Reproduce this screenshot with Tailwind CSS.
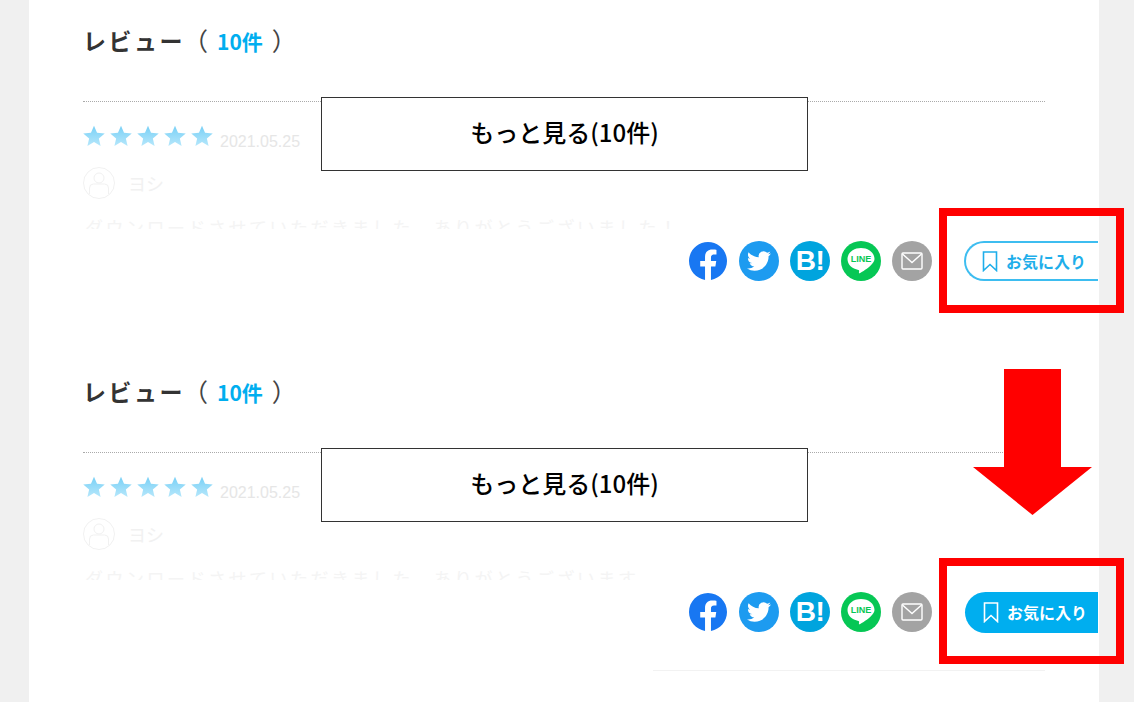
<!DOCTYPE html>
<html lang="ja">
<head>
<meta charset="utf-8">
<script src="https://cdn.jsdelivr.net/npm/@tailwindcss/browser@4"></script>
<title>レビュー</title>
</head>
<body class="m-0 bg-[#f0f0f0] overflow-hidden font-['Noto_Sans_CJK_JP','Noto_Sans',sans-serif]">
<svg width="0" height="0" class="absolute">
  <defs>
    <linearGradient id="st" x1="0" y1="0" x2="0" y2="1"><stop offset="0" stop-color="#78d0f6"/><stop offset="1" stop-color="#b6e7fb"/></linearGradient>
    <symbol id="star" viewBox="0 0 24 24"><path fill="url(#st)" d="M12 .8l3.3 7.7 8.4.7-6.4 5.500 1.900 8.200L12 18.600l-7.200 4.300 1.900-8.200L.3 9.200l8.400-.7z"/></symbol>
    <symbol id="fb" viewBox="0 0 24 24"><path fill="#1877f2" d="M24 12.073c0-6.627-5.373-12-12-12s-12 5.373-12 12c0 5.99 4.388 10.954 10.125 11.854v-8.385H7.078v-3.47h3.047V9.43c0-3.007 1.792-4.669 4.533-4.669 1.312 0 2.686.235 2.686.235v2.953H15.83c-1.491 0-1.956.925-1.956 1.874v2.25h3.328l-.532 3.47h-2.796v8.385C19.612 23.027 24 18.062 24 12.073z"/></symbol>
    <symbol id="tw" viewBox="0 0 40 40"><circle cx="20" cy="20" r="20" fill="#1d9bf0"/><g transform="translate(8 8) scale(1)"><path fill="#fff" d="M23.953 4.57a10 10 0 01-2.825.775 4.958 4.958 0 002.163-2.723c-.951.555-2.005.959-3.127 1.184a4.92 4.92 0 00-8.384 4.482C7.69 8.095 4.067 6.13 1.64 3.162a4.822 4.822 0 00-.666 2.475c0 1.71.87 3.213 2.188 4.096a4.904 4.904 0 01-2.228-.616v.06a4.923 4.923 0 003.946 4.827 4.996 4.996 0 01-2.212.085 4.936 4.936 0 004.604 3.417 9.867 9.867 0 01-6.102 2.105c-.39 0-.779-.023-1.17-.067a13.995 13.995 0 007.557 2.209c9.053 0 13.998-7.496 13.998-13.985 0-.21 0-.42-.015-.63A9.935 9.935 0 0024 4.59z"/></g></symbol>
    <symbol id="line" viewBox="0 0 40 40"><circle cx="20" cy="20" r="20" fill="#06c755"/><path fill="#fff" d="M20 7c-7.700 0-13.500 4.800-13.500 11.100 0 5.700 4.700 9.900 10.900 10.800.9.200.8 1 .6 2-.1.700-.4 1.900 1.200 1.100 1.600-.900 8.100-4.800 10.900-8 1.900-2.100 3.400-3.700 3.400-5.900C33.500 11.800 27.700 7 20 7z"/></symbol>
    <symbol id="mail" viewBox="0 0 40 40"><circle cx="20" cy="20" r="20" fill="#a3a3a3"/><g fill="none" stroke="#fff" stroke-width="1.400"><rect x="10" y="12" width="20" height="16" rx="1"/><path d="M10.500 13 20 21.500 29.500 13"/></g></symbol>
    <symbol id="bm" viewBox="0 0 16 21"><path fill="none" stroke="currentColor" stroke-width="1.600" d="M1.500 1h13v18.500L8 13.500l-6.500 6z"/></symbol>
    <symbol id="user" viewBox="0 0 32 32"><g fill="none" stroke="#f1f1f1" stroke-width="1"><circle cx="16" cy="16" r="15.500"/><circle cx="16" cy="11" r="5"/><path d="M6.500 27v-6q0-4 4-4h11q4 0 4 4v6"/></g></symbol>
  </defs>
</svg>

<main class="ml-[29px] w-[1070px] h-[702px] bg-white">

  <section class="relative h-[351px] pl-[54px] pr-[54px]">
    <h2 class="h-[84px] flex items-center pb-[4px] text-[23px] leading-none font-bold text-[#333] tracking-[2.5px]">
      <span>レビュー</span><span class="ml-[-2px] text-[25px] font-normal text-[#444] w-[34px] tracking-normal">（</span><span class="text-[#00aeef] text-[21px] tracking-normal font-bold mt-[3px]">10件</span><span class="text-[25px] font-normal text-[#444] ml-[9px] tracking-normal">）</span>
    </h2>
    <div class="h-[18px] border-b border-dotted border-[#aaa]"></div>
    <div class="h-[127px] overflow-hidden">
      <div class="flex items-center h-[24px] mt-[22px]">
        <div class="flex gap-[5px]">
          <svg class="w-[22px] h-[22px]"><use href="#star"/></svg><svg class="w-[22px] h-[22px]"><use href="#star"/></svg><svg class="w-[22px] h-[22px]"><use href="#star"/></svg><svg class="w-[22px] h-[22px]"><use href="#star"/></svg><svg class="w-[22px] h-[22px]"><use href="#star"/></svg>
        </div>
        <span class="ml-[7px] mt-[12px] text-[16px] leading-none text-[#e6e6e6] font-['Liberation_Sans',sans-serif]">2021.05.25</span>
      </div>
      <div class="flex items-center mt-[19px] h-[32px]">
        <svg class="w-[32px] h-[32px]"><use href="#user"/></svg>
        <span class="ml-[13px] text-[18px] leading-none text-[#f1f1f1]">ヨシ</span>
      </div>
      <p class="mt-[16px] ml-[2px] text-[18px] leading-[24px] tracking-[2.5px] whitespace-nowrap text-[#f4f4f4]">ダウンロードさせていただきました。ありがとうございました！</p>
    </div>
    <div class="flex items-center h-[40px] -mr-[53px] mt-[12px] justify-end">
      <div class="flex items-center gap-[11px] mr-[32px]">
        <svg class="w-[38px] h-[38px] ml-[1px] mr-[1px]"><use href="#fb"/></svg>
        <svg class="w-[40px] h-[40px]"><use href="#tw"/></svg>
        <span class="w-[40px] h-[40px] rounded-full bg-[#00a4de] text-white flex items-center justify-center text-[28px] font-bold tracking-[-0.5px] leading-none font-['Liberation_Sans',sans-serif]">B!</span>
        <span class="relative w-[40px] h-[40px]">
          <svg class="w-[40px] h-[40px]"><use href="#line"/></svg>
          <span class="absolute left-0 right-0 top-[13px] text-center text-[#06c755] text-[9px] leading-[10px] font-black font-['Liberation_Sans',sans-serif]">LINE</span>
        </span>
        <svg class="w-[40px] h-[40px]"><use href="#mail"/></svg>
      </div>
      <button class="w-[134px] h-[40px] flex items-center pl-[16px] rounded-l-full border-2 border-r-0 border-[#3dbdf0] bg-white text-[#1eaeea] text-[16px] font-bold whitespace-nowrap">
        <svg class="w-[16px] h-[21px]"><use href="#bm"/></svg><span class="ml-[8px]">お気に入り</span>
      </button>
    </div>
    <a class="absolute left-[292px] top-[97px] w-[487px] h-[74px] border border-[#333] bg-white flex items-center justify-center pb-[4px] text-[24px] font-medium text-black">もっと見る(10件)</a>
    <div class="absolute left-[910px] top-[208px] w-[185px] h-[105px] border-[8px] border-[#ff0000]"></div>
  </section>

  <section class="relative h-[351px] pl-[54px] pr-[54px]">
    <h2 class="h-[84px] flex items-center pb-[4px] text-[23px] leading-none font-bold text-[#333] tracking-[2.5px]">
      <span>レビュー</span><span class="ml-[-2px] text-[25px] font-normal text-[#444] w-[34px] tracking-normal">（</span><span class="text-[#00aeef] text-[21px] tracking-normal font-bold mt-[3px]">10件</span><span class="text-[25px] font-normal text-[#444] ml-[9px] tracking-normal">）</span>
    </h2>
    <div class="h-[18px] border-b border-dotted border-[#aaa]"></div>
    <div class="h-[127px] overflow-hidden">
      <div class="flex items-center h-[24px] mt-[22px]">
        <div class="flex gap-[5px]">
          <svg class="w-[22px] h-[22px]"><use href="#star"/></svg><svg class="w-[22px] h-[22px]"><use href="#star"/></svg><svg class="w-[22px] h-[22px]"><use href="#star"/></svg><svg class="w-[22px] h-[22px]"><use href="#star"/></svg><svg class="w-[22px] h-[22px]"><use href="#star"/></svg>
        </div>
        <span class="ml-[7px] mt-[12px] text-[16px] leading-none text-[#e6e6e6] font-['Liberation_Sans',sans-serif]">2021.05.25</span>
      </div>
      <div class="flex items-center mt-[19px] h-[32px]">
        <svg class="w-[32px] h-[32px]"><use href="#user"/></svg>
        <span class="ml-[13px] text-[18px] leading-none text-[#f1f1f1]">ヨシ</span>
      </div>
      <p class="mt-[16px] ml-[2px] text-[18px] leading-[24px] tracking-[2.5px] whitespace-nowrap text-[#f4f4f4]">ダウンロードさせていただきました。ありがとうございます</p>
    </div>
    <div class="flex items-center h-[40px] -mr-[53px] mt-[12px] justify-end">
      <div class="flex items-center gap-[11px] mr-[33px]">
        <svg class="w-[38px] h-[38px] ml-[1px] mr-[1px]"><use href="#fb"/></svg>
        <svg class="w-[40px] h-[40px]"><use href="#tw"/></svg>
        <span class="w-[40px] h-[40px] rounded-full bg-[#00a4de] text-white flex items-center justify-center text-[28px] font-bold tracking-[-0.5px] leading-none font-['Liberation_Sans',sans-serif]">B!</span>
        <span class="relative w-[40px] h-[40px]">
          <svg class="w-[40px] h-[40px]"><use href="#line"/></svg>
          <span class="absolute left-0 right-0 top-[13px] text-center text-[#06c755] text-[9px] leading-[10px] font-black font-['Liberation_Sans',sans-serif]">LINE</span>
        </span>
        <svg class="w-[40px] h-[40px]"><use href="#mail"/></svg>
      </div>
      <button class="w-[133px] h-[41px] flex items-center pl-[18px] rounded-l-full bg-[#00aeef] text-white text-[16px] font-bold whitespace-nowrap">
        <svg class="w-[16px] h-[21px]"><use href="#bm"/></svg><span class="ml-[8px]">お気に入り</span>
      </button>
    </div>
    <div class="ml-[570px] mt-[38px] border-t border-[#f2f2f2]"></div>
    <a class="absolute left-[292px] top-[97px] w-[487px] h-[74px] border border-[#333] bg-white flex items-center justify-center pb-[4px] text-[24px] font-medium text-black">もっと見る(10件)</a>
    <div class="absolute left-[910px] top-[207px] w-[185px] h-[106px] border-[8px] border-[#ff0000]"></div>
    <svg class="absolute left-[943px] top-[18px] w-[121px] h-[147px]" viewBox="0 0 121 147"><path fill="#ff0000" d="M32 0h57v98h31L60.500 146 1 98h31z"/></svg>
  </section>

</main>
</body>
</html>
